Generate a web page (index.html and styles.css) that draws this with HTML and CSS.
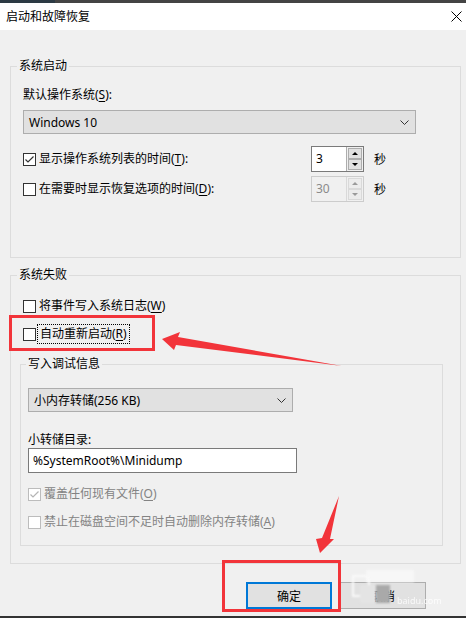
FILE: index.html
```html
<!DOCTYPE html>
<html lang="zh-CN">
<head>
  <meta charset="UTF-8">
  <title>启动和故障恢复</title>
  <link rel="stylesheet" href="styles.css">
</head>
<body>
<div class="topstrip"><span class="topstrip-left"></span></div>
<div class="titlebar">
  <span class="title">启动和故障恢复</span>
  <svg class="close" width="11" height="11" viewBox="0 0 11 11"><path d="M0.5 0.5 L10.5 10.5 M10.5 0.5 L0.5 10.5" stroke="#000" stroke-width="1"/></svg>
</div>

<div class="content">
  <fieldset class="group">
    <legend>系统启动</legend>
    <div class="group-body startup">
      <div class="field-label">默认操作系统(<u>S</u>):</div>
      <div class="select select-os">
        <span>Windows 10</span>
        <svg width="9" height="5" viewBox="0 0 9 5"><path d="M0.5 0.5 L4.5 4.5 L8.5 0.5" fill="none" stroke="#333"/></svg>
      </div>
      <div class="spin-row first">
        <label class="check"><span class="cb"><svg width="11" height="11" viewBox="0 0 11 11"><path d="M1.5 5.5 L4 8 L9.5 2.5" fill="none" stroke="#333" stroke-width="1.2"/></svg></span>显示操作系统列表的时间(<u>T</u>):</label>
        <div class="spin">
          <span class="spin-value">3</span>
          <span class="spin-btns">
            <span class="spin-btn"><span class="tri-up"></span></span>
            <span class="spin-btn"><span class="tri-down"></span></span>
          </span>
        </div>
        <span class="unit">秒</span>
      </div>
      <div class="spin-row">
        <label class="check"><span class="cb"></span>在需要时显示恢复选项的时间(<u>D</u>):</label>
        <div class="spin disabled">
          <span class="spin-value">30</span>
          <span class="spin-btns">
            <span class="spin-btn"><span class="tri-up"></span></span>
            <span class="spin-btn"><span class="tri-down"></span></span>
          </span>
        </div>
        <span class="unit">秒</span>
      </div>
    </div>
  </fieldset>

  <fieldset class="group failure">
    <legend>系统失败</legend>
    <div class="group-body">
      <label class="check row-w"><span class="cb"></span>将事件写入系统日志(<u>W</u>)</label>
      <label class="check row-r"><span class="cb"></span><span class="focus">自动重新启动(<u>R</u>)</span></label>

      <fieldset class="group sub">
        <legend>写入调试信息</legend>
        <div class="group-body debug">
          <div class="select select-dump">
            <span>小内存转储(256 KB)</span>
            <svg width="9" height="5" viewBox="0 0 9 5"><path d="M0.5 0.5 L4.5 4.5 L8.5 0.5" fill="none" stroke="#333"/></svg>
          </div>
          <div class="field-label dir-label">小转储目录:</div>
          <div class="textbox">%SystemRoot%\Minidump</div>
          <label class="check disabled row-o"><span class="cb"><svg width="11" height="11" viewBox="0 0 11 11"><path d="M1.5 5.5 L4 8 L9.5 2.5" fill="none" stroke="#b4b4b4" stroke-width="1.2"/></svg></span>覆盖任何现有文件(<u>O</u>)</label>
          <label class="check disabled row-a"><span class="cb"></span>禁止在磁盘空间不足时自动删除内存转储(<u>A</u>)</label>
        </div>
      </fieldset>
    </div>
  </fieldset>

  <div class="buttons">
    <button class="btn default">确定</button>
    <button class="btn">取消</button>
  </div>
</div>

<div class="bottomstrip"></div>

<!-- annotations drawn on top of the screenshot -->
<div class="mark mark-restart"></div>
<div class="mark mark-ok"></div>
<svg class="arrows" width="466" height="618" viewBox="0 0 466 618">
  <polygon points="162,339 180,332 178,337 342,366 176,345 174,350" fill="#f2343a"/>
  <polygon points="339,496 330,539 334,539 320,553 316,539 322,538" fill="#f2343a"/>
</svg>
<div class="watermark">
  <span class="wm wm-a"></span>
  <span class="wm wm-b"></span>
  <span class="wm wm-c"></span>
  <span class="wm wm-d"></span>
  <span class="wm-text">baidu.com</span>
</div>
</body>
</html>
```

FILE: styles.css
```css
body {
  margin: 0;
  width: 466px;
  height: 618px;
  overflow: hidden;
  position: relative;
  background: #f0f0f0;
  font-family: "Noto Sans", "Noto Sans CJK SC", sans-serif;
  font-size: 12px;
  color: #000;
}

u {
  text-decoration-thickness: 1px;
  text-underline-offset: 2px;
}

.topstrip {
  height: 3px;
  background: #444;
}
.topstrip-left {
  display: block;
  width: 55px;
  height: 3px;
  background: #2c3a44;
}

.titlebar {
  height: 27px;
  background: #fff;
  display: flex;
  align-items: center;
  justify-content: space-between;
  padding: 0 4px 0 6px;
}
.title {
  line-height: 16px;
}

.content {
  padding: 28px 0 0 10px;
}

.group {
  margin: 0;
  padding: 0;
  min-width: 0;
  width: 449px;
  border: 1px solid #dcdcdc;
}
.group legend {
  margin-left: 6px;
  padding: 0 2px;
  line-height: 16px;
}
.group-body {
  padding: 15px 0 17px 12px;
}

.startup {
  padding: 13px 0 55px 12px;
}

.field-label {
  line-height: 16px;
}

.select {
  box-sizing: border-box;
  height: 24px;
  background: #e1e1e1;
  border: 1px solid #adadad;
  display: flex;
  align-items: center;
  justify-content: space-between;
  padding: 0 6px 0 5px;
}
.select-os {
  width: 393px;
  margin-top: 7px;
}

.spin-row {
  display: flex;
  align-items: center;
  margin-top: 4px;
}
.spin-row.first {
  margin-top: 12px;
}
.spin-row .check {
  width: 288px;
}

.check {
  display: flex;
  align-items: center;
  line-height: 16px;
}
.cb {
  box-sizing: border-box;
  width: 13px;
  height: 13px;
  border: 1px solid #333;
  background: #fff;
  margin-right: 3px;
  flex: none;
  display: flex;
  align-items: center;
  justify-content: center;
}
.check.disabled {
  color: #838383;
}
.check.disabled .cb {
  border-color: #bcbcbc;
}

.spin {
  box-sizing: border-box;
  width: 53px;
  height: 26px;
  display: flex;
  border: 1px solid #7a7a7a;
  background: #fff;
}
.spin-value {
  flex: 1;
  padding-left: 4px;
  line-height: 24px;
}
.spin-btns {
  width: 17px;
  display: flex;
  flex-direction: column;
  justify-content: space-between;
  padding: 1px;
  box-sizing: border-box;
  background: #f0f0f0;
  border-left: 1px solid #adadad;
}
.spin-btn {
  height: 10px;
  background: #e1e1e1;
  border: 1px solid #adadad;
  display: flex;
  align-items: center;
  justify-content: center;
}
.tri-up {
  border-left: 3px solid transparent;
  border-right: 3px solid transparent;
  border-bottom: 3px solid #000;
}
.tri-down {
  border-left: 3px solid transparent;
  border-right: 3px solid transparent;
  border-top: 3px solid #000;
}
.spin.disabled {
  border-color: #cccccc;
  background: #f0f0f0;
}
.spin.disabled .spin-value {
  color: #8a8a8a;
}
.spin.disabled .spin-btns {
  border-left-color: #d9d9d9;
}
.spin.disabled .spin-btn {
  background: #ececec;
  border-color: #d9d9d9;
}
.spin.disabled .tri-up {
  border-bottom-color: #9a9a9a;
}
.spin.disabled .tri-down {
  border-top-color: #9a9a9a;
}

.unit {
  margin-left: 10px;
}

.failure {
  margin-top: 9px;
}
.row-r {
  margin-top: 12px;
}
.focus {
  outline: 1px dotted #000;
  outline-offset: 1px;
  padding: 0 1px;
}

.group.sub {
  width: 421px;
  margin: 14px 0 0 -3px;
}
.group.sub legend {
  margin-left: 5px;
}
.debug {
  padding: 16px 0 15px 7px;
}
.select-dump {
  width: 265px;
}
.dir-label {
  margin-top: 21px;
  line-height: 14px;
}
.textbox {
  box-sizing: border-box;
  width: 269px;
  height: 25px;
  margin-top: 1px;
  background: #fff;
  border: 1px solid #7a7a7a;
  padding-left: 4px;
  line-height: 23px;
}
.row-o {
  margin-top: 13px;
}
.row-a {
  margin-top: 12px;
}

.buttons {
  display: flex;
  gap: 8px;
  margin-top: 18px;
  padding-left: 236px;
}
.btn {
  box-sizing: border-box;
  width: 86px;
  height: 27px;
  font: inherit;
  background: #e1e1e1;
  border: 1px solid #adadad;
  padding: 0;
}
.btn.default {
  border: 2px solid #0078d7;
}

.bottomstrip {
  position: absolute;
  left: 0;
  bottom: 0;
  width: 466px;
  height: 2px;
  background: #333;
}

.mark {
  position: absolute;
  border: 3px solid #f2343a;
  box-sizing: border-box;
}
.mark-restart {
  left: 9px;
  top: 315px;
  width: 146px;
  height: 36px;
}
.mark-ok {
  left: 222px;
  top: 560px;
  width: 119px;
  height: 52px;
}

.arrows {
  position: absolute;
  left: 0;
  top: 0;
}

.watermark {
  position: absolute;
  left: 348px;
  top: 566px;
  width: 100px;
  height: 44px;
}
.wm {
  position: absolute;
  filter: blur(1px);
}
.wm-a {
  left: 18px;
  top: 4px;
  width: 48px;
  height: 12px;
  background: #f7f7f7;
}
.wm-b {
  left: 4px;
  top: 9px;
  width: 14px;
  height: 18px;
  border: 2px solid #fafafa;
  border-radius: 0 6px 6px 0;
}
.wm-c {
  left: 12px;
  top: 19px;
  width: 16px;
  height: 18px;
  background: #e4e4e4;
}
.wm-d {
  left: 28px;
  top: 19px;
  width: 14px;
  height: 18px;
  background: #a9a9a9;
}
.wm-text {
  position: absolute;
  left: 49px;
  top: 30px;
  font-size: 9px;
  line-height: 10px;
  color: #fff;
  opacity: 0.8;
}
```
